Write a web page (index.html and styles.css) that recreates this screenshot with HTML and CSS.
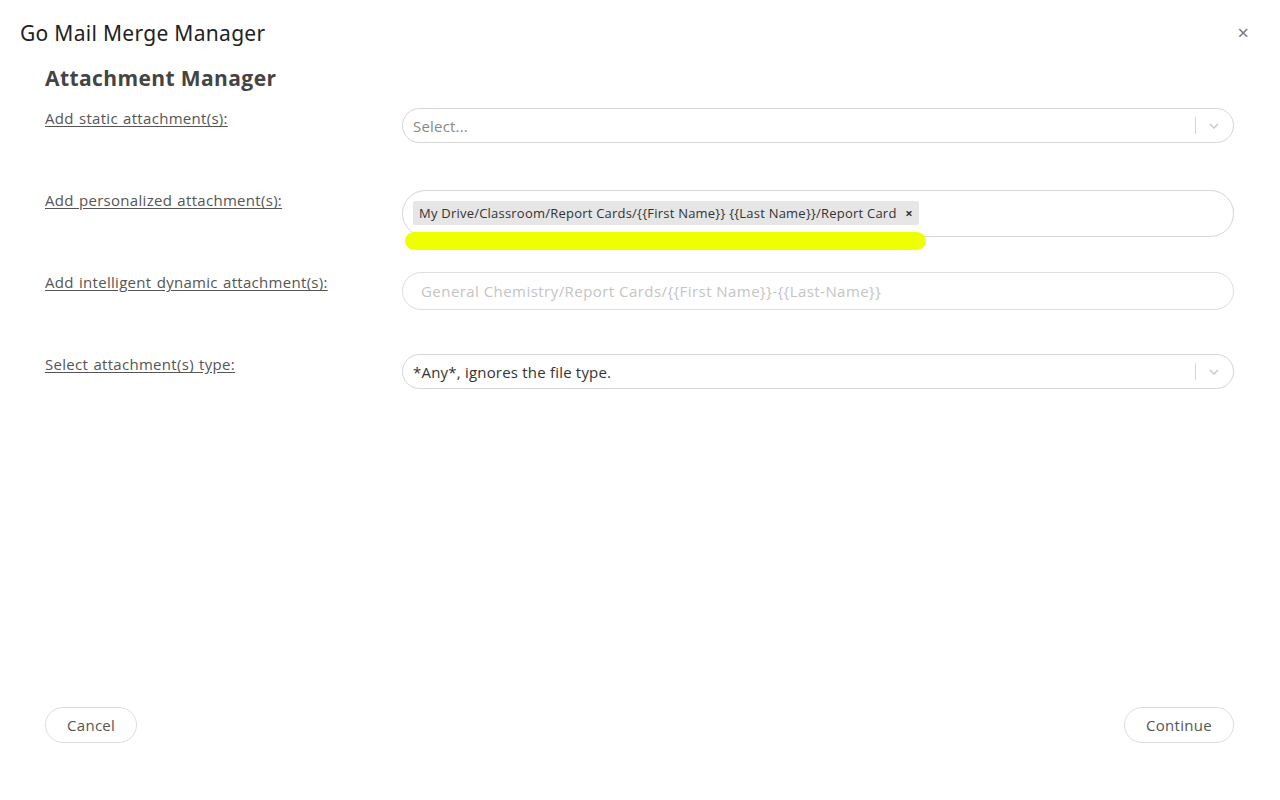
FILE: index.html
```html
<!DOCTYPE html>
<html lang="en">
<head>
    <meta charset="UTF-8">
    <meta name="viewport" content="width=device-width, initial-scale=1.0">
    <title>Go Mail Merge Manager</title>
    <link rel="stylesheet" href="styles.css">
</head>
<body>
    <div class="dialog">
        <div class="dialog-header">
            <h2 class="dialog-title">Go Mail Merge Manager</h2>
            <span class="close-btn">&times;</span>
        </div>

        <div class="dialog-body">
            <h1>Attachment Manager</h1>

            <div class="form-row">
                <label class="field-label">Add static attachment(s):</label>
                <div class="select-box">
                    <span class="placeholder">Select...</span>
                    <span class="indicator">
                        <span class="sep"></span>
                        <svg width="12" height="8" viewBox="0 0 12 8"><path d="M2 2l4 4 4-4" fill="none" stroke="#c8c8c8" stroke-width="1.5"/></svg>
                    </span>
                </div>
            </div>

            <div class="form-row">
                <label class="field-label">Add personalized attachment(s):</label>
                <div class="multi-box">
                    <span class="tag">My Drive/Classroom/Report Cards/{{First Name}} {{Last Name}}/Report Card <span class="tag-x">&times;</span></span>
                    <span class="marker"></span>
                </div>
            </div>

            <div class="form-row">
                <label class="field-label">Add intelligent dynamic attachment(s):</label>
                <input class="text-input" type="text" placeholder="General Chemistry/Report Cards/{{First Name}}-{{Last-Name}}">
            </div>

            <div class="form-row">
                <label class="field-label">Select attachment(s) type:</label>
                <div class="select-box">
                    <span class="value">*Any*, ignores the file type.</span>
                    <span class="indicator">
                        <span class="sep"></span>
                        <svg width="12" height="8" viewBox="0 0 12 8"><path d="M2 2l4 4 4-4" fill="none" stroke="#c8c8c8" stroke-width="1.5"/></svg>
                    </span>
                </div>
            </div>
        </div>

        <div class="dialog-footer">
            <button class="btn">Cancel</button>
            <button class="btn">Continue</button>
        </div>
    </div>
</body>
</html>
```

FILE: styles.css
```css
* {
    margin: 0;
    padding: 0;
    box-sizing: border-box;
}

body {
    font-family: "Open Sans", "Noto Sans", sans-serif;
    background: #fff;
    color: #333;
}

.dialog {
    height: 100vh;
    display: flex;
    flex-direction: column;
}

.dialog-header {
    display: flex;
    justify-content: space-between;
    align-items: center;
    padding: 19px 31px 0 20px;
    height: 46px;
}

.dialog-title {
    font-family: "Noto Sans", sans-serif;
    font-weight: 400;
    font-size: 21px;
    letter-spacing: 0.3px;
    color: #222;
}

.close-btn {
    font-size: 20px;
    color: #777;
    line-height: 1;
}

.dialog-body {
    padding: 0 46px 0 45px;
}

h1 {
    font-size: 21px;
    font-weight: 700;
    letter-spacing: 0.4px;
    color: #444;
    margin-top: 18px;
    height: 44px;
}

.form-row {
    display: flex;
    height: 82px;
}

.field-label {
    width: 357px;
    flex-shrink: 0;
    font-size: 15px;
    letter-spacing: 0.3px;
    word-spacing: 1px;
    color: #555;
    text-decoration: underline;
    text-underline-offset: 2px;
    line-height: 20px;
}

.select-box {
    flex: 1;
    height: 35px;
    border: 1px solid #d6d6d6;
    border-radius: 18px;
    display: flex;
    align-items: center;
    justify-content: space-between;
    padding-left: 10px;
    font-size: 15px;
    letter-spacing: 0.2px;
    align-self: flex-start;
}

.placeholder {
    color: #888;
}

.value {
    color: #333;
}

.indicator {
    display: flex;
    align-items: center;
    height: 100%;
}

.sep {
    width: 1px;
    height: 17px;
    background: #d6d6d6;
    margin-right: 12px;
}

.indicator svg {
    margin-right: 13px;
}

.multi-box {
    position: relative;
    flex: 1;
    height: 47px;
    border: 1px solid #d6d6d6;
    border-radius: 24px;
    display: flex;
    align-items: center;
    padding-left: 10px;
    align-self: flex-start;
}

.tag {
    background: #e6e6e6;
    font-size: 13px;
    letter-spacing: 0.22px;
    color: #333;
    padding: 3px 6px;
    border-radius: 2px;
    margin-top: -1px;
}

.tag-x {
    font-weight: 700;
    margin-left: 5px;
}

/* highlighter mark over the box edge */
.marker {
    position: absolute;
    left: 2px;
    top: 41px;
    width: 521px;
    height: 18px;
    background: #eeff00;
    border-radius: 9px;
}

.text-input {
    flex: 1;
    height: 38px;
    border: 1px solid #dedede;
    border-radius: 19px;
    padding-left: 18px;
    font-family: inherit;
    font-size: 15px;
    letter-spacing: 0.45px;
    outline: none;
    align-self: flex-start;
}

.text-input::placeholder {
    color: #c4c4c4;
}

.dialog-footer {
    margin-top: auto;
    display: flex;
    justify-content: space-between;
    padding: 0 46px 57px 45px;
}

.btn {
    height: 36px;
    border: 1px solid #dcdcdc;
    border-radius: 18px;
    background: #fff;
    font-family: inherit;
    font-size: 15px;
    letter-spacing: 0.3px;
    color: #555;
    padding: 0 21px;
}
```
